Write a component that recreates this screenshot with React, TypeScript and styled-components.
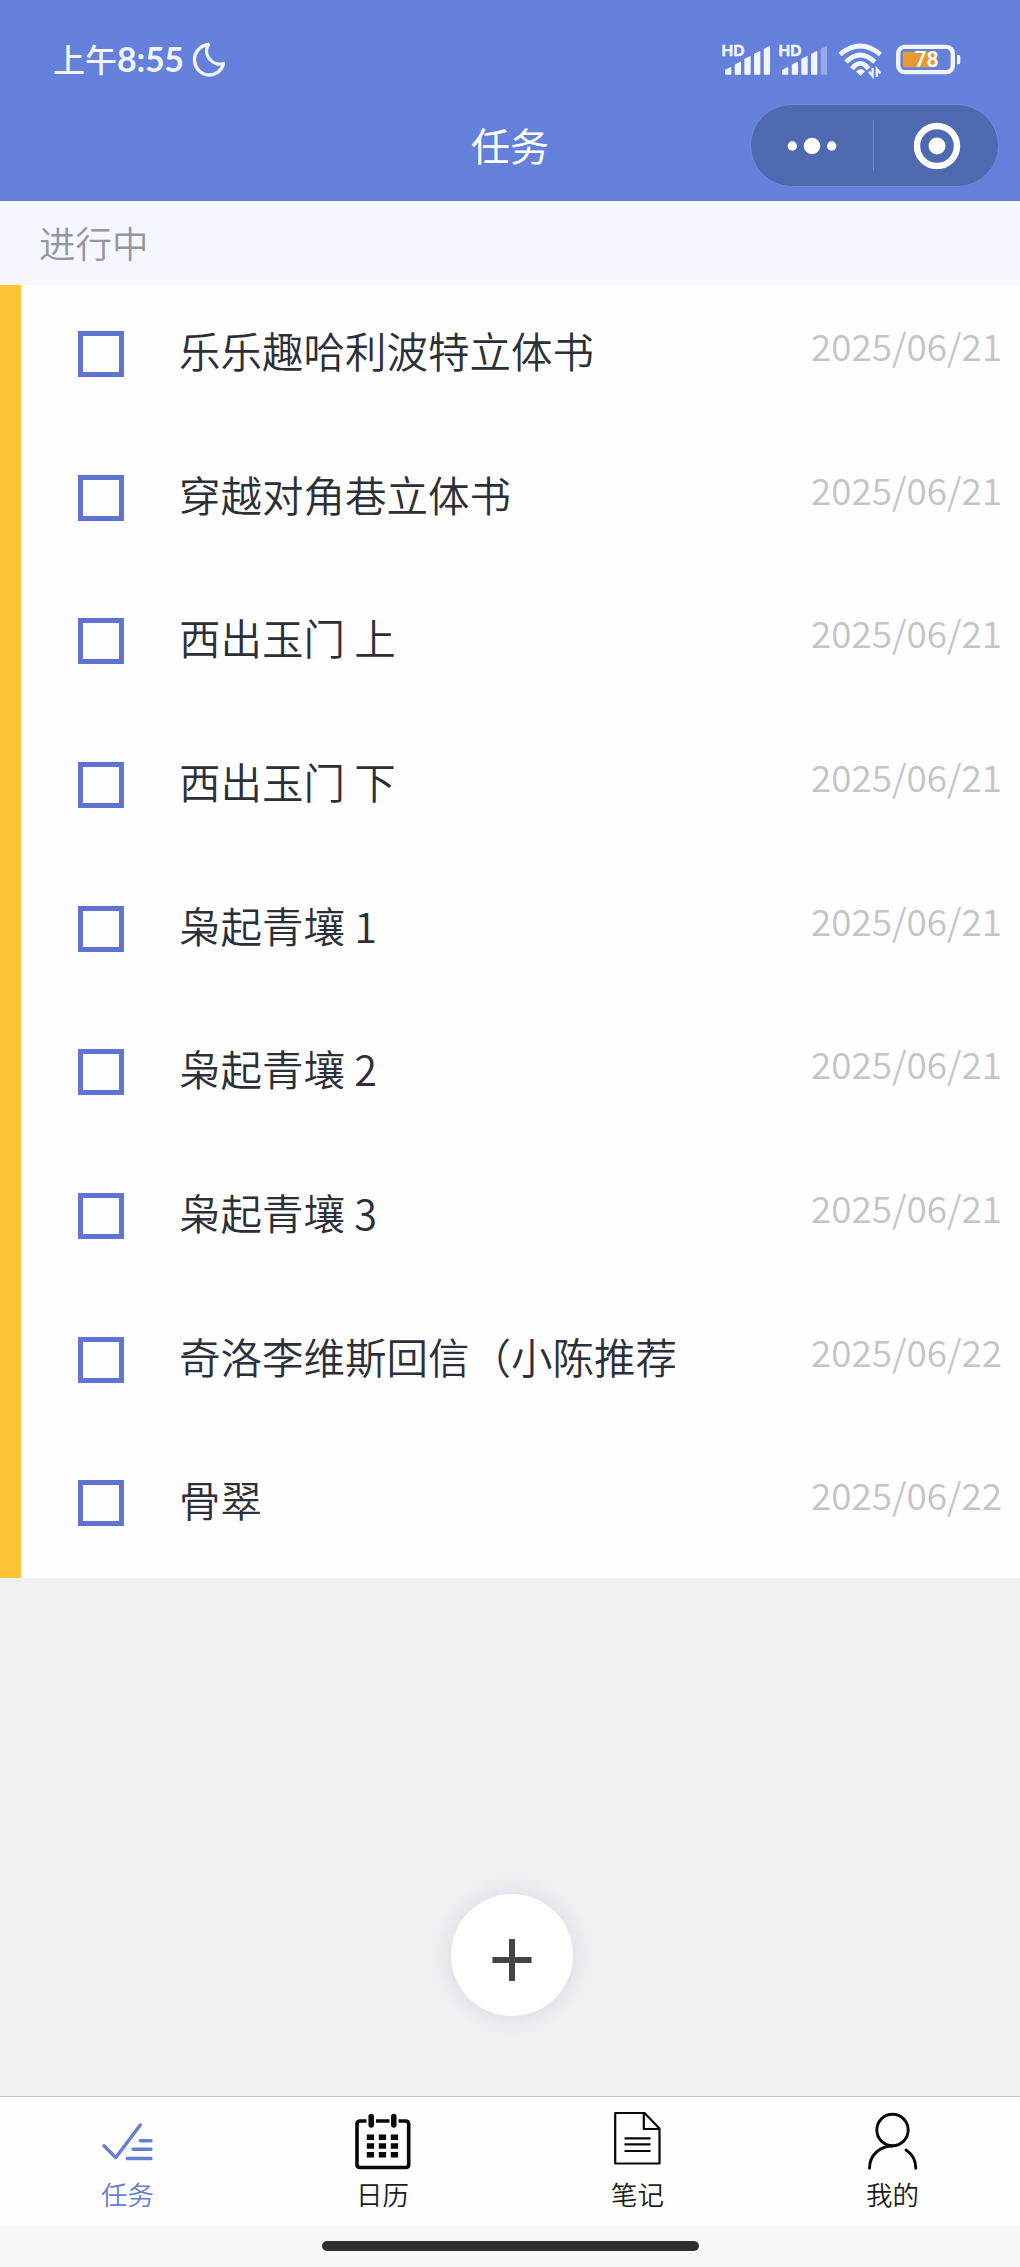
import React from "react";
import styled, { createGlobalStyle } from "styled-components";

const GlobalStyle = createGlobalStyle`
  *, *::before, *::after { box-sizing: border-box; }
  body {
    margin: 0;
    background: #efeff4;
    font-family: "Noto Sans CJK SC", sans-serif;
  }
`;

const Screen = styled.div`
  display: flex;
  flex-direction: column;
  width: 1020px;
  height: 2267px;
  overflow: hidden;
  background: #efeff4;
`;

const Header = styled.header`
  display: flex;
  flex-direction: column;
  height: 201px;
  background: #6480db;
  color: #fff;
`;

const StatusBar = styled.div`
  display: flex;
  justify-content: space-between;
  height: 104px;
  padding: 40px 60px 0 53px;
  color: #f0f5ff;
`;

const StatusGroup = styled.div`
  display: flex;
  align-items: flex-start;
`;

const Clock = styled.span`
  width: 139px;
  margin-top: -2px;
  font-size: 32px;
  font-weight: 500;
  line-height: 40px;
  white-space: nowrap;
`;

const ClockDigits = styled.span`
  font-family: Lato, sans-serif;
  font-size: 34px;
  font-weight: 700;
  line-height: 1;
  letter-spacing: -0.3px;
`;

const TitleBar = styled.div`
  display: grid;
  grid-template-columns: 1fr 250px 1fr;
  align-items: start;
  height: 97px;
`;

const Title = styled.h1`
  grid-column: 2;
  margin: 12px 0 0;
  font-size: 39px;
  font-weight: 400;
  line-height: 56px;
  text-align: center;
`;

const Capsule = styled.div`
  justify-self: end;
  display: flex;
  align-items: center;
  width: 249px;
  height: 83px;
  margin-right: 21px;
  border: 1px solid #738bd9;
  border-radius: 42px;
  background: #4f69b1;
`;

const CapsuleButton = styled.button<{ $shift: number }>`
  display: flex;
  flex: 1;
  align-items: center;
  justify-content: center;
  height: 100%;
  padding: 0 0 0 ${(p) => p.$shift}px;
  border: 0;
  background: transparent;
`;

const CapsuleDivider = styled.span`
  width: 1px;
  height: 51px;
  background: #6f87cf;
`;

const SectionHeader = styled.div`
  height: 84px;
  padding: 15px 0 0 39px;
  background: #f4f7fd;
  color: #9495a3;
  font-size: 36.5px;
  font-weight: 350;
  line-height: 54px;
`;

const TaskList = styled.ul`
  display: grid;
  grid-template-rows: repeat(9, 1fr);
  height: 1293px;
  margin: 0;
  padding: 0;
  border-left: 21px solid #ffc436;
  background: #fefefe;
  list-style: none;
`;

const TaskRow = styled.li`
  display: flex;
  align-items: flex-start;
  padding: 0 18px 0 57px;
`;

const Checkbox = styled.span`
  width: 46px;
  height: 46px;
  margin: 46px 55px 0 0;
  border: 5px solid #5f74ce;
`;

const TaskName = styled.span`
  flex: 1;
  margin-top: 35px;
  color: #2d2f38;
  font-size: 41.5px;
  font-weight: 350;
  line-height: 60px;
  white-space: pre;
`;

const TaskDate = styled.time`
  margin-top: 33px;
  color: #c4c4c4;
  font-size: 36.9px;
  font-weight: 350;
  line-height: 54px;
`;

const Spacer = styled.div`
  display: flex;
  flex: 1;
  align-items: flex-start;
  justify-content: center;
  padding-top: 316px;
`;

const AddButton = styled.button`
  display: flex;
  align-items: center;
  justify-content: center;
  width: 122px;
  height: 122px;
  margin-left: 3px;
  padding: 9px 0 0;
  border: 0;
  border-radius: 50%;
  background: #fff;
  box-shadow: 0 0 22px rgba(60, 60, 80, 0.12);
`;

const TabBar = styled.nav`
  display: grid;
  grid-template-columns: repeat(4, 1fr);
  height: 130px;
  border-top: 1px solid #c4c4c6;
  background: #fefefe;
`;

const Tab = styled.div<{ $active?: boolean }>`
  display: flex;
  flex-direction: column;
  align-items: center;
  padding-top: 14px;
  color: ${(p) => (p.$active ? "#667fce" : "#1c1c1c")};
  font-size: 26.5px;
  font-weight: 350;
  line-height: 40px;
  svg { color: ${(p) => (p.$active ? "#667fce" : "#080808")}; }
`;

const TabLabel = styled.span`
  margin-top: -1px;
`;

const GestureArea = styled.div`
  display: flex;
  justify-content: center;
  height: 41px;
  padding-top: 15px;
  background: #f7f7f7;
`;

const GestureBar = styled.span`
  width: 377px;
  height: 10px;
  border-radius: 5px;
  background: #2f2f2f;
`;

const tasks = [
  { name: "乐乐趣哈利波特立体书", date: "2025/06/21" },
  { name: "穿越对角巷立体书", date: "2025/06/21" },
  { name: "西出玉门 上", date: "2025/06/21" },
  { name: "西出玉门 下", date: "2025/06/21" },
  { name: "枭起青壤 1", date: "2025/06/21" },
  { name: "枭起青壤 2", date: "2025/06/21" },
  { name: "枭起青壤 3", date: "2025/06/21" },
  { name: "奇洛李维斯回信（小陈推荐", date: "2025/06/22" },
  { name: "骨翠", date: "2025/06/22" },
];

const MoonIcon = () => (
  <svg width="36" height="40" viewBox="0 0 36 40" fill="none" stroke="currentColor" strokeWidth="3.4" strokeLinejoin="round">
    <path d="M16.500 4.500C8 5.500 2.500 12 2.500 19.500C2.500 28 9 35 17 35C24 35 30 30.500 31.500 23.500C27 25 21.500 23.500 18 19.500C14 15.500 13.500 9.500 16.500 4.500Z" />
  </svg>
);

const bars = [
  { x: 3, top: 27 },
  { x: 12.7, top: 21.7 },
  { x: 22.3, top: 16 },
  { x: 32, top: 11 },
  { x: 41.7, top: 6 },
];

const SignalIcon = ({ weak }: { weak?: boolean }) => (
  <svg width="57" height="40" viewBox="0 0 57 40" fill="currentColor" stroke="currentColor" strokeWidth="1.500" strokeLinejoin="round">
    <text x="-0.500" y="15.700" strokeWidth="0.300" fontFamily="Inter, sans-serif" fontSize="15" fontWeight="700" textLength="23" lengthAdjust="spacingAndGlyphs">HD</text>
    {bars.map(({ x, top }, i) => (
      <path
        key={x}
        opacity={weak && i === 4 ? 0.38 : 1}
        d={`M${x + 0.8} 33.900V${top + 3.5}L${x + 5.6} ${top + 0.8}V33.900Z`}
      />
    ))}
  </svg>
);

const WifiIcon = () => (
  <svg width="58" height="40" viewBox="0 0 58 40" fill="none" stroke="currentColor" strokeWidth="4.800">
    <path d="M4 14.500Q24.200 -2.500 44.500 14.500" />
    <path d="M10 22Q24.200 8 38.800 22" />
    <path d="M16 28.800Q24.200 18 32.500 28.800" />
    <path d="M20 31.500Q24.500 26.500 29 31.500L24.500 36Z" fill="currentColor" stroke="none" />
    <path d="M36.600 28V36L33 31.500M40.800 37V29L44.500 33.500" strokeWidth="2.200" />
  </svg>
);

const BatteryIcon = () => (
  <svg width="66" height="40" viewBox="0 0 66 40" overflow="visible">
    <rect x="4.200" y="6.900" width="54.600" height="25.200" rx="6.500" fill="none" stroke="currentColor" strokeWidth="4.400" />
    <rect x="8.700" y="11.700" width="34" height="15.600" rx="2" fill="#e79a32" />
    <path d="M63 15h1.500q1.800 0 1.800 1.800v5.600q0 1.800-1.800 1.800H63Z" fill="currentColor" />
    <text x="32.500" y="27.300" textAnchor="middle" fontFamily="Roboto, sans-serif" fontSize="21.500" fontWeight="500" fill="#fff">78</text>
  </svg>
);

const MoreIcon = () => (
  <svg width="50" height="20" viewBox="0 0 50 20" fill="#fff">
    <circle cx="5.300" cy="10" r="4.700" />
    <circle cx="25" cy="10" r="8.300" />
    <circle cx="44.700" cy="10" r="4.700" />
  </svg>
);

const CloseIcon = () => (
  <svg width="48" height="48" viewBox="0 0 48 48">
    <circle cx="24" cy="24" r="20" fill="none" stroke="#fff" strokeWidth="6.400" />
    <circle cx="24" cy="24" r="8.500" fill="#fff" />
  </svg>
);

const PlusIcon = () => (
  <svg width="40" height="42" viewBox="0 0 40 42" stroke="#444" strokeWidth="6">
    <path d="M0.500 21h39M20 0v42" />
  </svg>
);

const TaskIcon = () => (
  <svg width="64" height="64" viewBox="0 0 64 64" fill="none" stroke="currentColor" strokeWidth="3.400" strokeLinecap="round" strokeLinejoin="round">
    <path d="M8 34.700L19.800 46.500L44.300 14M44.300 29.700H55M37 38.300H55M31.300 47.500H55" />
  </svg>
);

const CalendarIcon = () => (
  <svg width="64" height="64" viewBox="0 0 64 64" fill="none" stroke="currentColor">
    <path d="M15.500 10H9Q6 10 6 13V53.500Q6 56.500 9 56.500H54.700Q57.700 56.500 57.700 53.500V13Q57.700 10 54.700 10H47.500M25 10h13.500" strokeWidth="3.600" />
    <path d="M20.200 5.500v8.500M42.800 5.500v8.500" strokeWidth="5.500" strokeLinecap="round" />
    <path d="M15.800 26.300h31.600M15.800 35h31.600M15.800 43.700h31.600" strokeWidth="5.500" strokeDasharray="7.300 4.700" />
  </svg>
);

const NoteIcon = () => (
  <svg width="64" height="64" viewBox="0 0 64 64" fill="none" stroke="currentColor" strokeWidth="2.200" strokeLinejoin="round">
    <path d="M9.200 2H38.500L53.500 17.500V52.500H9.200ZM37.800 2V18H53.500" />
    <path d="M18.500 27.300h26M18.500 33.400h26M18.500 40h26" />
  </svg>
);

const ProfileIcon = () => (
  <svg width="64" height="64" viewBox="0 0 64 64" fill="none" stroke="currentColor" strokeWidth="2.900" strokeLinecap="round">
    <circle cx="31.500" cy="19" r="15.700" />
    <path d="M8.500 57.300C8.500 44 19 35 31.500 35M45 39C51 43 54.800 50 54.800 57.300" />
  </svg>
);

const tabs = [
  { label: "任务", icon: <TaskIcon />, active: true },
  { label: "日历", icon: <CalendarIcon /> },
  { label: "笔记", icon: <NoteIcon /> },
  { label: "我的", icon: <ProfileIcon /> },
];

export default function App() {
  return (
    <Screen>
      <GlobalStyle />
      <Header>
        <StatusBar>
          <StatusGroup>
            <Clock>上午<ClockDigits>8:55</ClockDigits></Clock>
            <MoonIcon />
          </StatusGroup>
          <StatusGroup>
            <SignalIcon />
            <SignalIcon weak />
            <WifiIcon />
            <BatteryIcon />
          </StatusGroup>
        </StatusBar>
        <TitleBar>
          <Title>任务</Title>
          <Capsule>
            <CapsuleButton $shift={0} aria-label="更多"><MoreIcon /></CapsuleButton>
            <CapsuleDivider />
            <CapsuleButton $shift={3} aria-label="关闭"><CloseIcon /></CapsuleButton>
          </Capsule>
        </TitleBar>
      </Header>
      <SectionHeader>进行中</SectionHeader>
      <TaskList>
        {tasks.map((task) => (
          <TaskRow key={task.name}>
            <Checkbox />
            <TaskName>{task.name}</TaskName>
            <TaskDate>{task.date}</TaskDate>
          </TaskRow>
        ))}
      </TaskList>
      <Spacer>
        <AddButton aria-label="添加"><PlusIcon /></AddButton>
      </Spacer>
      <TabBar>
        {tabs.map((tab) => (
          <Tab key={tab.label} $active={tab.active}>
            {tab.icon}
            <TabLabel>{tab.label}</TabLabel>
          </Tab>
        ))}
      </TabBar>
      <GestureArea><GestureBar /></GestureArea>
    </Screen>
  );
}
